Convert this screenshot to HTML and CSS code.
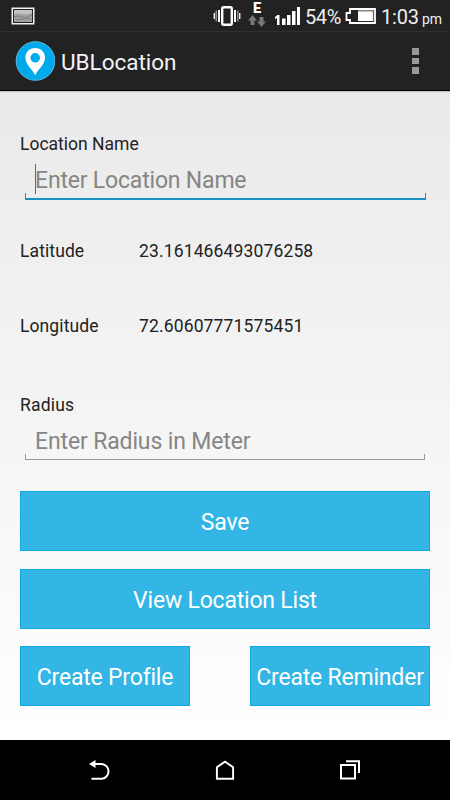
FILE: index.html
```html
<!DOCTYPE html>
<html lang="en">
<head>
<meta charset="utf-8">
<title>UBLocation</title>
<link rel="stylesheet" href="styles.css">
</head>
<body>
<div class="screen">
  <header class="status">
    <svg class="picture" width="24" height="18" viewBox="0 0 24 18">
      <rect x=".5" y=".5" width="23" height="17" fill="#f2f2f2"/>
      <rect x="2" y="2" width="20" height="14" fill="#222"/>
      <rect x="3" y="3" width="18" height="12" fill="#c4c4c4"/>
      <path d="M3 7q5-1 9 0t9-1v9H3z" fill="#a2a2a2"/>
      <path d="M3 10q4-2 8 0t10-2M5 13q6-2 16-1" fill="none" stroke="#777" stroke-width=".8"/>
    </svg>
    <svg class="vibrate" width="28" height="22" viewBox="0 0 28 22">
      <rect x="9.2" y="2.2" width="9.6" height="17.6" rx="1.5" fill="none" stroke="#fff" stroke-width="2.4"/>
      <path d="M6 5v12M22 5v12" stroke="#fff" stroke-width="2"/>
      <path d="M3.2 5.5v11M24.8 5.5v11" stroke="#aaa" stroke-width="1.2"/>
      <path d="M1.3 8v6M26.7 8v6" stroke="#eee" stroke-width="1.4"/>
    </svg>
    <div class="network">
      <span>E</span>
      <svg width="18" height="12" viewBox="0 0 18 12" fill="#777"><path d="M4.5 0 9 5.5H6.5V10h-4V5.500H0zM13.500 12 9 6.500h2.500V2h4v4.500H18z"/></svg>
    </div>
    <svg class="signal" width="25" height="19" viewBox="0 0 25 19" fill="#fff"><path d="M0 11 2.500 9H4.500v10H2v-7L0 13zM7 12.500h3.500V19H7zM12 9h3.500v10H12zM17 5h3.500v14H17zM22 1h3v18h-3z"/></svg>
    <span class="percent">54%</span>
    <svg class="battery" width="31" height="16" viewBox="0 0 31 16">
      <path d="M5 1h25v14H5v-3H1.500V5H5z" fill="#222" stroke="#fff" stroke-width="1.800"/>
      <rect x="13" y="2.500" width="15" height="10.500" fill="#fff"/>
      <path d="M13 2.800h15" stroke="#888" stroke-width="1.500"/>
      <path d="M28.300 2v11.500" stroke="#888" stroke-width=".8"/>
    </svg>
    <span class="time">1:03</span><span class="pm">pm</span>
  </header>

  <div class="appbar">
    <svg class="logo" width="40" height="41" viewBox="0 0 40 41">
      <circle cx="20.500" cy="20" r="19.300" fill="#00a8ec" stroke="#58bce8"/>
      <path fill="#fff" fill-rule="evenodd" d="M20.200 7C14.400 7 10.400 11.200 10.400 16.500c0 7.200 6.800 11.500 9.800 17.700C23.200 28 30 23.700 30 16.500 30 11.200 26 7 20.200 7zm0 5a4.800 4.800 0 1 1 0 9.600 4.800 4.800 0 0 1 0-9.600z"/>
    </svg>
    <h1>UBLocation</h1>
    <div class="overflow"><i></i><i></i><i></i></div>
  </div>

  <main class="form">
    <label class="label name-label"><span>Location Name</span></label>
    <div class="field focused"><i class="cursor"></i><span>Enter Location Name</span></div>
    <div class="row latitude"><span class="key">Latitude</span><span class="value">23.161466493076258</span></div>
    <div class="row longitude"><span class="key">Longitude</span><span class="value">72.60607771575451</span></div>
    <label class="label radius-label"><span>Radius</span></label>
    <div class="field radius"><span>Enter Radius in Meter</span></div>
    <div class="buttons">
      <button><span>Save</span></button>
      <button><span>View Location List</span></button>
      <div class="pair">
        <button class="profile"><span>Create Profile</span></button>
        <button class="reminder"><span>Create Reminder</span></button>
      </div>
    </div>
  </main>

  <nav class="nav">
    <svg width="22" height="20" viewBox="0 0 22 20"><path d="M5 4h8a7.400 7.400 0 0 1 0 14.700H2.500" fill="none" stroke="#fff" stroke-width="2"/><path d="M0 4 6.500 0v8z" fill="#fff"/></svg>
    <svg width="22" height="20" viewBox="0 0 22 20"><path d="M2.900 18.700V7.200L11 1.600l8.100 5.600v11.500z" fill="none" stroke="#fff" stroke-width="1.900"/></svg>
    <svg width="22" height="20" viewBox="0 0 22 20" fill="none" stroke="#fff" stroke-width="2"><path d="M2 5h14v13.500H2zM7 1.300h13V13"/></svg>
  </nav>
</div>
</body>
</html>
```

FILE: styles.css
```css
* { box-sizing: border-box; }
body { margin: 0; font-family: Roboto, "Liberation Sans", sans-serif; }
svg { display: block; flex: none; }
.screen { width: 450px; height: 800px; display: flex; flex-direction: column; overflow: hidden; }

.status {
  height: 32px; flex: none; display: flex; align-items: flex-start;
  background: #222; border-bottom: 1px solid #303030; color: #eee; white-space: nowrap;
}
.picture { margin: 7px 0 0 11px; }
.vibrate { margin: 5px 0 0 178px; }
.network { width: 18px; margin: 2px 0 0 7px; }
.network span { display: block; height: 13px; line-height: 14px; font-size: 14.5px; font-weight: 900; text-align: center; color: #fff; }
.signal { margin: 6px 0 0 9px; }
.percent { width: 37px; margin-left: 5px; line-height: 34px; font-size: 20px; letter-spacing: -.4px; }
.battery { margin: 8px 0 0 3px; }
.time { width: 38px; margin-left: 5px; line-height: 34px; font-size: 20px; letter-spacing: -.2px; }
.pm { margin-left: 3px; line-height: 38px; font-size: 14px; letter-spacing: -.1px; }

.appbar {
  height: 59px; flex: none; display: flex; align-items: center;
  padding: 0 31px 0 15px; background: #222; border-bottom: 1px solid #000; color: #f3f3f3;
}
.appbar h1 { margin: 1px 0 0 6px; font-size: 22.5px; font-weight: 400; line-height: 30px; letter-spacing: -.02px; }
.overflow { display: flex; flex-direction: column; gap: 3px; margin-left: auto; }
.overflow i { width: 7px; height: 6.5px; background: #999; }

.form {
  flex: 1; display: flex; flex-direction: column; padding: 0 20px;
  background: linear-gradient(#bbb 0, #e8e8e8 2px, #eaeaea 5px, #fff 100%);
  color: #222;
}
.label, .key, .value { font-size: 17.5px; line-height: 22px; }
.value { letter-spacing: .14px; }
.label { display: block; height: 22px; }
.name-label { margin-top: 42px; }
.field {
  position: relative; height: 45px; margin: 0 5px; padding: 11px 0 0 10px;
  font-size: 23px; line-height: 30px; letter-spacing: -.19px; color: #858585; white-space: nowrap;
}
.field::after {
  content: ""; position: absolute; left: 0; right: 0; bottom: 0; height: 5px;
  border: 1px solid #999; border-top: 0;
}
.focused::after { border-color: #1a8fc8; border-bottom-width: 2px; right: -1px; }
.cursor { position: absolute; left: 10px; top: 9px; width: 1px; height: 30px; background: #666; }
.row { display: flex; height: 22px; }
.key { width: 119px; letter-spacing: .1px; }
.latitude { margin-top: 40px; }
.longitude { margin-top: 53px; }
.radius-label { margin-top: 57px; letter-spacing: .2px; }
.radius { height: 44px; letter-spacing: -.14px; }
.buttons { display: flex; flex-direction: column; gap: 18px; margin-top: 31px; }
button {
  height: 60px; padding: 4px 0 0; border: 1px solid #0fa9e2; background: #33b5e5; color: #fff;
  font: 23px/30px Roboto, "Liberation Sans", sans-serif; letter-spacing: -.2px; white-space: nowrap;
}
.pair { display: flex; justify-content: space-between; margin-top: -1px; }
.profile { width: 170px; }
.reminder { width: 180px; }

.nav { height: 60px; flex: none; display: flex; justify-content: center; align-items: center; gap: 103px; background: #000; }
```
